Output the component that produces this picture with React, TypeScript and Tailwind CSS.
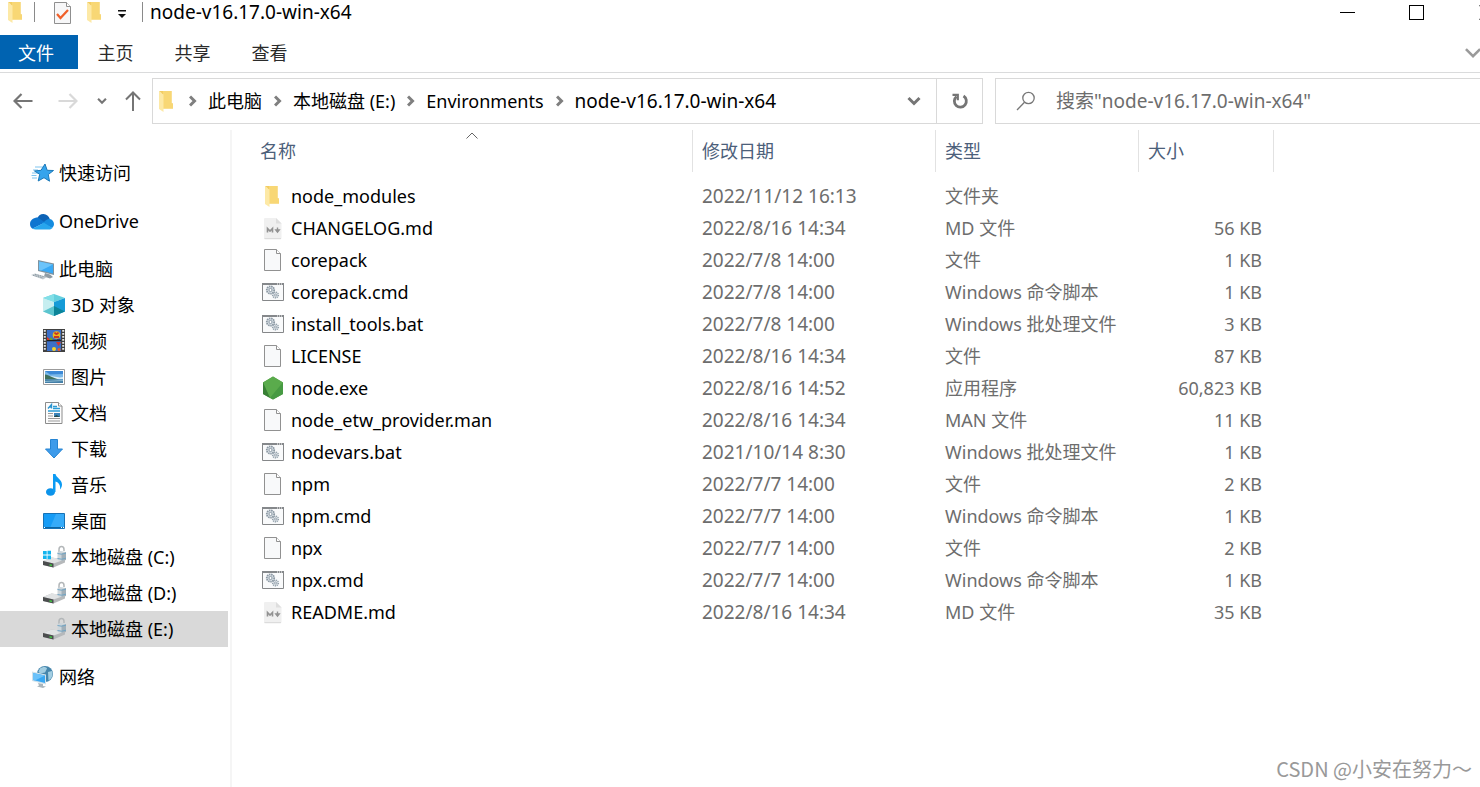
import type { ReactNode } from "react";
import clsx from "clsx";

type IconProps = { className?: string };

/* ---------- Icons ---------- */

const FolderIcon = ({ className }: IconProps) => (
    <svg className={className} width="24" height="24" viewBox="0 0 24 24" aria-hidden="true">
        <path d="M8 2h9.500v12.500h1.500v5H8z" fill="#f5cf63" />
        <path d="M9 2h8.500v12.500H19v5H9z" fill="#f8d775" />
        <path d="M5 2l4.500 3.500V23L5 20z" fill="#fde9a6" />
        <path d="M5 2h4v3.200z" fill="#f3cd62" />
    </svg>
);

const FileIcon = () => (
    <svg width="24" height="24" viewBox="0 0 24 24" aria-hidden="true">
        <path d="M4.500 1.500h12l4 4v17h-16z" fill="#f8f9fa" stroke="#919191" />
        <path d="M16.500 1.500v4h4" fill="#fff" stroke="#919191" />
    </svg>
);

const MarkdownIcon = () => (
    <svg width="24" height="24" viewBox="0 0 24 24" aria-hidden="true">
        <path d="M5 2h11l5.500 5.500V22a1.500 1.500 0 0 1-1.500 1.500H5.500A1.500 1.500 0 0 1 4 22V3a1 1 0 0 1 1-1z" fill="#f0f0f0" />
        <path d="M4.500 22.500h16.500" stroke="#dcdcdc" />
        <path d="M16 2v5.500h5.500z" fill="#dedede" />
        <path d="M7.500 16.500v-4l2.500 2.500 2.500-2.500v4" fill="none" stroke="#929292" strokeWidth="1.600" />
        <path d="M17.500 11.500v3M15.800 14h3.400l-1.700 2.200z" fill="#929292" stroke="#929292" strokeWidth="1.400" />
    </svg>
);

const ScriptIcon = () => (
    <svg width="24" height="24" viewBox="0 0 24 24" aria-hidden="true">
        <path d="M2.500 3.500h21v17h-21z" fill="#f9fafb" stroke="#858789" />
        <path d="M2 4h22" stroke="#85888b" strokeWidth="2" />
        <path d="M17 4h1M19 4h1M21 4h1" stroke="#fff" />
        <circle cx="10.500" cy="10" r="3.700" fill="#dfe5ea" stroke="#8b98a3" strokeWidth="1.800" strokeDasharray="1.500 0.700" />
        <circle cx="10.500" cy="10" r="1.600" fill="#fff" stroke="#8796a3" />
        <circle cx="15.500" cy="15" r="2.800" fill="#e6eaee" stroke="#92a0ab" strokeWidth="1.600" strokeDasharray="1.200 0.700" />
        <circle cx="15.500" cy="15" r="1" fill="#fff" stroke="#93a1ac" />
    </svg>
);

const NodeIcon = () => (
    <svg width="24" height="24" viewBox="0 0 24 24" aria-hidden="true">
        <path d="M13 .500L23 6.500v11.500L13 23.500 3 18V6.500z" fill="#4f9f45" />
        <path d="M13 .500L23 6.500 10 22 3 6.500z" fill="#5aab4c" />
        <path d="M3 6.500L10 22 3 18z" fill="#387f35" />
        <path d="M23 6.500V18l-10 5.500L10 22z" fill="#479a43" />
    </svg>
);

const QuickAccessIcon = () => (
    <svg width="24" height="24" viewBox="0 0 24 24" aria-hidden="true">
        <path d="M5 6h8M3 9h5M2 12h6M2 17h5M1.500 14.500h5" stroke="#7fc4ee" strokeWidth="1" />
        <path d="M15 3l2.200 6.300 6.300.2-5.200 4 1.200 6.700-5.500-3.500L8.200 20l1.500-6.700L4.500 10l6.500-.700z" fill="#35a4ed" stroke="#1c79b9" />
    </svg>
);

const OneDriveIcon = () => (
    <svg width="24" height="24" viewBox="0 0 24 24" aria-hidden="true">
        <path d="M7 10c1-3 3.500-5 6.500-4.900 3 .1 5.400 2 6.300 4.900L14 15z" fill="#0d63b6" />
        <path d="M8 8.500c-4.500 0-8 2.500-8 6.500 0 2 .9 3.800 2.400 4.700L15 13.500z" fill="#0e75d0" />
        <path d="M14.500 12.500c1.500-2 3.500-2.800 5.300-2.500 2.400.3 4.200 2.400 4.200 5 0 1.800-.8 3.200-2 4L12 14z" fill="#158bdf" />
        <path d="M2.400 19.700L14 13.800l8.500 5.200c-.7.900-2 1.500-3.500 1.500H6c-1.500 0-2.700-.2-3.600-.8z" fill="#27a6ee" />
    </svg>
);

const ComputerIcon = () => (
    <svg width="24" height="24" viewBox="0 0 24 24" aria-hidden="true">
        <path d="M8 3l16 3.500v11.500L8 14z" fill="#7f929e" />
        <path d="M9 4.500l14 3v9L9 13z" fill="#39a9f5" />
        <path d="M9 4.500l14 3L11 13.500 9 13z" fill="#6cc4fa" />
        <path d="M15 16l5 1.500 3 2.500-3 1.500-6-2z" fill="#8f9ba3" />
        <path d="M1 18l4-1.500L17 20l-4 2.500z" fill="#c3cbd0" />
        <path d="M3 18.300l10 2.700M5 17.300l10 2.700" stroke="#8d9ba4" strokeDasharray="1.500 1" />
    </svg>
);

const CubeIcon = () => (
    <svg width="24" height="24" viewBox="0 0 24 24" aria-hidden="true">
        <path d="M1 5l11-4 11 4-11 4z" fill="#65d0dd" />
        <path d="M1 5l11 4v14L1 18.500z" fill="#c6eef0" />
        <path d="M23 5l-11 4v14l11-4.500z" fill="#159bd7" />
        <path d="M12 13l-11 5.500L12 23z" fill="#5cc5cf" />
        <path d="M12 13l11 5.500L12 23z" fill="#0b8498" />
        <path d="M1 5l11-4v8z" fill="#82dfe7" />
    </svg>
);

const VideoIcon = () => (
    <svg width="24" height="24" viewBox="0 0 24 24" aria-hidden="true">
        <path d="M1 0h22v23H1z" fill="#414141" />
        <path d="M5 1h14v21H5z" fill="#3c70c8" />
        <path d="M2.800 1v21M21.200 1v21" stroke="#e6e6e6" strokeWidth="2" strokeDasharray="1.800 1.200" />
        <path d="M5 11.500h14" stroke="#222" strokeWidth="1.500" />
        <circle cx="14.500" cy="6" r="3.800" fill="#e9b91d" />
        <path d="M12.500 3.500c1.500 2 2.500 2 4 0M12 8h5" stroke="#c73524" strokeWidth="1.800" fill="none" />
        <path d="M5 8l4 3H5zM14 13h5l-2.500 4z" fill="#d5362b" />
        <path d="M7 11l2-3 2 3z" fill="#61a52d" />
        <circle cx="12" cy="20" r="2" fill="#f4d22a" />
        <circle cx="17" cy="20.500" r="1.500" fill="#ec5b25" />
        <path d="M15 10.500h3v1.500h-3z" fill="#371f1b" />
    </svg>
);

const PictureIcon = () => (
    <svg width="24" height="24" viewBox="0 0 24 24" aria-hidden="true">
        <path d="M1.500 4.500h21v15h-21z" fill="#fff" stroke="#9b9b9b" />
        <path d="M3 6h18v12H3z" fill="#7bb9e9" />
        <path d="M3 6h18v3L8 9.500z" fill="#3c89d6" />
        <path d="M8 11l10 1.500 3-.5v2H9z" fill="#d9edf7" />
        <path d="M3 9.500c4 .5 7 3 14 5H3z" fill="#3f705c" />
        <path d="M3 14.500h18V18H3z" fill="#447fa8" />
        <path d="M3 16.500l18-1" stroke="#88b8cf" />
    </svg>
);

const DocumentIcon = () => (
    <svg width="24" height="24" viewBox="0 0 24 24" aria-hidden="true">
        <path d="M3.500 1.500h13l3.500 3.500v17.500H3.500z" fill="#fcfcfc" stroke="#8c8c8c" />
        <path d="M16.500 1.500V5H20" fill="#fff" stroke="#8c8c8c" />
        <path d="M6 7.500L9.500 3.500v4M7 6h3" stroke="#2b94cf" strokeWidth="1.400" fill="none" />
        <path d="M11 5.500h4M11 7.500h7M6 10h12" stroke="#2a9bd5" strokeWidth="1.300" />
        <path d="M6 12.500h5M6 15h5M6 17.500h12M6 20h12" stroke="#999" />
        <path d="M12 12h6v4h-6z" fill="#3b84bb" />
        <path d="M12 15.500l2.500-1.500 3.500 2h-6z" fill="#244d50" />
    </svg>
);

const DownloadIcon = () => (
    <svg width="24" height="24" viewBox="0 0 24 24" aria-hidden="true">
        <path d="M8.500 2.500h7v9.500h5L12 21 3.500 12h5z" fill="#3e9bea" stroke="#2584d3" />
    </svg>
);

const MusicIcon = () => (
    <svg width="24" height="24" viewBox="0 0 24 24" aria-hidden="true">
        <ellipse cx="8.500" cy="19" rx="4.500" ry="3.800" fill="#0c93ea" />
        <path d="M11 1h2.500c.5 3.500 6.500 5.500 6.500 10.500 0 2-.8 3.700-2 5 .7-4-1-7-4.500-8V19H11z" fill="#0c9bf3" />
    </svg>
);

const DesktopIcon = () => (
    <svg width="24" height="24" viewBox="0 0 24 24" aria-hidden="true">
        <path d="M1.500 4.500h21v15h-21z" fill="#169cf6" stroke="#1672b6" />
        <path d="M14 5h8v14H8z" fill="#36abf9" />
        <path d="M2 18.500h20" stroke="#0c65a3" />
        <path d="M2 18.500h1M19 18.500h1M21 18.500h1" stroke="#fff" />
    </svg>
);

const DriveIcon = ({ system }: { system?: boolean }) => (
    <svg width="24" height="24" viewBox="0 0 24 24" aria-hidden="true">
        <path d="M1 16L9.500 12.500 23 14.500v3L11.500 22.500 1 20z" fill="#b6b9bb" />
        <path d="M1 16l8.500-3.500L23 14.500l-11.500 4z" fill="#e1e3e4" />
        <path d="M1 16l10.500 2.500v4L1 20z" fill="#4b4d4e" />
        <path d="M7.500 19.800l2.500.6" stroke="#42c443" strokeWidth="1.500" />
        <path d="M17 7V4.500c0-2 1-3 2.500-3S22 2.500 22 4.500V6" fill="none" stroke="#b3b7b9" strokeWidth="1.500" />
        <path d="M15.500 7l3-1 5.500 1v8l-5 1-3.500-1z" fill="#cdd5da" />
        <path d="M19.500 8.500L24 7v8l-4.500 1z" fill="#a1afb8" />
        <path d="M15.500 8.500l4 .7 4.500-1M15.500 13.500l4 .7 4.500-1" fill="none" stroke="#72a5c5" />
        {system && <path d="M1 6h3.700v3.500H1zM5.500 5.700H9v3.800H5.500zM1 10.500h3.700V14H1zM5.500 10.500H9v3.800H5.500z" fill="#14b4ee" />}
    </svg>
);

const NetworkIcon = () => (
    <svg width="24" height="24" viewBox="0 0 24 24" aria-hidden="true">
        <circle cx="15" cy="9" r="8" fill="#4686ac" />
        <path d="M10 3.500c3-2 6-2 7 0l-2 4-5 1-1.500-2zM18 7l4-1c1.500 4-.5 8-3.500 9.500z" fill="#a3cee2" />
        <path d="M2 6.500l14 3v10l-14-3.500z" fill="#d0e1ea" />
        <path d="M3 8l12 2.500v7.500L3 15z" fill="#38a7f3" />
        <path d="M3 8l12 2.500L5 15.500 3 15z" fill="#6bc2fa" />
        <path d="M8 18l5 1v2l3 .5-3 1.500-6-1.500 2-1z" fill="#aab6bd" />
    </svg>
);

const PropertiesIcon = () => (
    <svg width="24" height="24" viewBox="0 0 24 24" aria-hidden="true">
        <path d="M4.500 2.500h12l4 4v17h-16z" fill="#f7f7f8" stroke="#8f8f8f" />
        <path d="M16.500 2.500v4h4" fill="#fff" stroke="#8f8f8f" />
        <path d="M7 14l3.500 4 7.500-8" fill="none" stroke="#f0602a" strokeWidth="2.200" />
    </svg>
);

const BackArrow = () => (
    <svg width="20" height="16" viewBox="0 0 20 16" fill="none" stroke="currentColor" strokeWidth="2.200" aria-hidden="true">
        <path d="M19.500 8H2M8.500 1L1.500 8l7 7" />
    </svg>
);

const ForwardArrow = () => (
    <svg width="20" height="16" viewBox="0 0 20 16" fill="none" stroke="currentColor" strokeWidth="2.200" aria-hidden="true">
        <path d="M.500 8H18M11.500 1l7 7-7 7" />
    </svg>
);

const UpArrow = () => (
    <svg width="16" height="20" viewBox="0 0 16 20" fill="none" stroke="currentColor" strokeWidth="2" aria-hidden="true">
        <path d="M8 20V2M1 8.500L8 1.500l7 7" />
    </svg>
);

const ChevronDown = ({ size = 14, stroke = 3 }: { size?: number; stroke?: number }) => (
    <svg width={size} height={size} viewBox="0 0 14 14" fill="none" stroke="currentColor" strokeWidth={stroke} aria-hidden="true">
        <path d="M1.500 4L7 9.500 12.500 4" />
    </svg>
);

const ChevronRight = () => (
    <svg width="8" height="12" viewBox="0 0 8 12" fill="none" stroke="#7f7f7f" strokeWidth="3" aria-hidden="true">
        <path d="M1 1.500L5.500 6 1 10.500" />
    </svg>
);

const RefreshIcon = () => (
    <svg width="18" height="18" viewBox="0 0 18 18" fill="none" stroke="#757575" strokeWidth="2.800" aria-hidden="true">
        <path d="M12.500 4A6 6 0 1 1 5.500 4.500" />
        <path d="M1.500 2.800h5.300v5.500" strokeWidth="2.200" />
    </svg>
);

const SearchIcon = () => (
    <svg width="20" height="20" viewBox="0 0 20 20" fill="none" stroke="#777" strokeWidth="1.300" aria-hidden="true">
        <circle cx="12.500" cy="7" r="5.700" />
        <path d="M8.500 11.200L1 19" />
    </svg>
);

/* ---------- Data ---------- */

type NavItem = { label: string; icon: ReactNode; selected?: boolean };

const navGroups: { root: NavItem; children?: NavItem[] }[] = [
    { root: { label: "快速访问", icon: <QuickAccessIcon /> } },
    { root: { label: "OneDrive", icon: <OneDriveIcon /> } },
    {
        root: { label: "此电脑", icon: <ComputerIcon /> },
        children: [
            { label: "3D 对象", icon: <CubeIcon /> },
            { label: "视频", icon: <VideoIcon /> },
            { label: "图片", icon: <PictureIcon /> },
            { label: "文档", icon: <DocumentIcon /> },
            { label: "下载", icon: <DownloadIcon /> },
            { label: "音乐", icon: <MusicIcon /> },
            { label: "桌面", icon: <DesktopIcon /> },
            { label: "本地磁盘 (C:)", icon: <DriveIcon system /> },
            { label: "本地磁盘 (D:)", icon: <DriveIcon /> },
            { label: "本地磁盘 (E:)", icon: <DriveIcon />, selected: true },
        ],
    },
    { root: { label: "网络", icon: <NetworkIcon /> } },
];

const fileIcons = {
    folder: <FolderIcon />,
    md: <MarkdownIcon />,
    file: <FileIcon />,
    script: <ScriptIcon />,
    node: <NodeIcon />,
};

const files: { name: string; date: string; type: string; size: string; icon: keyof typeof fileIcons }[] = [
    { name: "node_modules", date: "2022/11/12 16:13", type: "文件夹", size: "", icon: "folder" },
    { name: "CHANGELOG.md", date: "2022/8/16 14:34", type: "MD 文件", size: "56 KB", icon: "md" },
    { name: "corepack", date: "2022/7/8 14:00", type: "文件", size: "1 KB", icon: "file" },
    { name: "corepack.cmd", date: "2022/7/8 14:00", type: "Windows 命令脚本", size: "1 KB", icon: "script" },
    { name: "install_tools.bat", date: "2022/7/8 14:00", type: "Windows 批处理文件", size: "3 KB", icon: "script" },
    { name: "LICENSE", date: "2022/8/16 14:34", type: "文件", size: "87 KB", icon: "file" },
    { name: "node.exe", date: "2022/8/16 14:52", type: "应用程序", size: "60,823 KB", icon: "node" },
    { name: "node_etw_provider.man", date: "2022/8/16 14:34", type: "MAN 文件", size: "11 KB", icon: "file" },
    { name: "nodevars.bat", date: "2021/10/14 8:30", type: "Windows 批处理文件", size: "1 KB", icon: "script" },
    { name: "npm", date: "2022/7/7 14:00", type: "文件", size: "2 KB", icon: "file" },
    { name: "npm.cmd", date: "2022/7/7 14:00", type: "Windows 命令脚本", size: "1 KB", icon: "script" },
    { name: "npx", date: "2022/7/7 14:00", type: "文件", size: "2 KB", icon: "file" },
    { name: "npx.cmd", date: "2022/7/7 14:00", type: "Windows 命令脚本", size: "1 KB", icon: "script" },
    { name: "README.md", date: "2022/8/16 14:34", type: "MD 文件", size: "35 KB", icon: "md" },
];

/* ---------- Parts ---------- */

function TitleBar() {
    return (
        <header className="flex h-6 items-center">
            <FolderIcon className="ml-[3px]" />
            <span className="ml-[7px] h-5 w-px bg-[#8a8a8a]" />
            <button aria-label="属性" className="ml-[15px]">
                <PropertiesIcon />
            </button>
            <button aria-label="新建文件夹" className="ml-2">
                <FolderIcon />
            </button>
            <button aria-label="自定义快速访问工具栏" className="ml-[11px]">
                <svg width="10" height="10" viewBox="0 0 10 10" className="mt-1.5" aria-hidden="true">
                    <path d="M1 0h8v1.500H1zM1 4h8L5 8z" fill="#111" />
                </svg>
            </button>
            <span className="ml-[15px] h-5 w-px bg-[#8a8a8a]" />
            <h1 className="ml-[7px] text-[19px] leading-6">node-v16.17.0-win-x64</h1>
            <div className="-mr-10 ml-auto flex">
                <button aria-label="最小化" className="flex h-6 w-[69px] items-center justify-center">
                    <span className="h-px w-[15px] bg-black" />
                </button>
                <button aria-label="最大化" className="flex h-6 w-[69px] items-center justify-center">
                    <span className="size-[15px] border border-black" />
                </button>
                <button aria-label="关闭" className="flex h-6 w-[69px] items-center justify-center">
                    <svg width="13" height="15" viewBox="0 0 13 15" stroke="#000" aria-hidden="true">
                        <path d="M.500 .500l12 14M12.500 .500l-12 14" />
                    </svg>
                </button>
            </div>
        </header>
    );
}

function Ribbon() {
    return (
        <div className="mt-[11px] flex h-[38px] items-start border-b border-[#dadbdc]">
            <button className="h-[34px] w-[78px] bg-[#0063b1] pt-0.5 pr-1.5 text-white">文件</button>
            <button className="h-[34px] w-[77px] pt-0.5 pr-0.5 text-[#2b2b2b]">主页</button>
            <button className="h-[34px] w-[77px] pt-0.5 pr-0.5 text-[#2b2b2b]">共享</button>
            <button className="h-[34px] w-[77px] pt-0.5 pr-0.5 text-[#2b2b2b]">查看</button>
            <button aria-label="展开功能区" className="-mr-0.5 ml-auto h-[34px] pt-0.5 text-[#9a9a9a]">
                <ChevronDown size={18} stroke={2} />
            </button>
        </div>
    );
}

function Crumb({ children, large }: { children: ReactNode; large?: boolean }) {
    return (
        <li className="flex items-center gap-[11px]">
            <ChevronRight />
            <a href="#" className={clsx("leading-6", large && "text-[19px]")}>
                {children}
            </a>
        </li>
    );
}

function AddressRow() {
    return (
        <div className="mt-[5px] flex h-[46px] items-center">
            <div className="flex w-[152px] shrink-0 items-center text-[#757575]">
                <button aria-label="后退" className="ml-[13px]"><BackArrow /></button>
                <button aria-label="前进" className="ml-[25px] text-[#d9d9d9]"><ForwardArrow /></button>
                <button aria-label="最近浏览的位置" className="ml-[19px]"><ChevronDown size={10} /></button>
                <button aria-label="上移" className="ml-[18px]"><UpArrow /></button>
            </div>
            <nav aria-label="地址" className="flex h-full min-w-0 flex-1 items-center border border-[#d9d9d9]">
                <FolderIcon className="ml-px shrink-0" />
                <ol className="ml-[11px] flex gap-3 whitespace-nowrap">
                    <Crumb>此电脑</Crumb>
                    <Crumb>本地磁盘 (E:)</Crumb>
                    <Crumb>Environments</Crumb>
                    <Crumb large>node-v16.17.0-win-x64</Crumb>
                </ol>
                <button aria-label="以前的位置" className="ml-auto pr-[15px] text-[#757575]">
                    <ChevronDown />
                </button>
                <button aria-label="刷新" className="flex h-full w-[46px] items-center justify-center border-l border-[#d9d9d9]">
                    <RefreshIcon />
                </button>
            </nav>
            <label className="ml-3 flex h-full w-[485px] shrink-0 items-center gap-5 border border-r-0 border-[#d9d9d9] pl-5">
                <SearchIcon />
                <input
                    type="search"
                    aria-label="搜索"
                    placeholder={'搜索"node-v16.17.0-win-x64"'}
                    className="min-w-0 flex-1 text-[19px] leading-6 outline-none placeholder:text-[#6d6d6d]"
                />
            </label>
        </div>
    );
}

function NavRow({ item, child }: { item: NavItem; child?: boolean }) {
    return (
        <a
            href="#"
            aria-current={item.selected ? "page" : undefined}
            className={clsx(
                "mr-0.5 flex h-9 items-center gap-[5px] leading-6",
                child ? "pl-[42px]" : "pl-[30px]",
                item.selected && "bg-[#d9d9d9]"
            )}
        >
            {item.icon}
            {item.label}
        </a>
    );
}

function Sidebar() {
    return (
        <aside className="w-[232px] shrink-0 border-r-2 border-[#f5f5f5] pt-[25px]">
            <ul className="flex flex-col gap-3">
                {navGroups.map(({ root, children }) => (
                    <li key={root.label}>
                        <NavRow item={root} />
                        {children && (
                            <ul>
                                {children.map((item) => (
                                    <li key={item.label}>
                                        <NavRow item={item} child />
                                    </li>
                                ))}
                            </ul>
                        )}
                    </li>
                ))}
            </ul>
        </aside>
    );
}

function FileList() {
    return (
        <table className="h-fit w-[1042px] table-fixed border-separate border-spacing-0 text-left">
            <colgroup>
                <col className="w-[461px]" />
                <col className="w-[243px]" />
                <col className="w-[203px]" />
                <col className="w-[135px]" />
            </colgroup>
            <thead className="text-[#4c607a]">
                <tr className="h-[42px]">
                    <th className="relative border-r border-[#e2e2e2] p-0 pl-7 font-normal">
                        <button>名称</button>
                        <svg width="12" height="7" viewBox="0 0 12 7" className="absolute top-0.5 left-[234px]" fill="none" stroke="#666" aria-hidden="true">
                            <path d="M.500 6.500L6 1l5.500 5.500" />
                        </svg>
                    </th>
                    <th className="border-r border-[#e2e2e2] p-0 pl-[9px] font-normal"><button>修改日期</button></th>
                    <th className="border-r border-[#e2e2e2] p-0 pl-[9px] font-normal"><button>类型</button></th>
                    <th className="border-r border-[#e2e2e2] p-0 pl-[9px] font-normal"><button>大小</button></th>
                </tr>
            </thead>
            <tbody className="text-[#6d6d6d] before:block before:h-2 before:content-['']">
                {files.map((file) => (
                    <tr key={file.name} className="h-8">
                        <td className="p-0 pl-7 text-black">
                            <span className="flex items-center gap-[7px] leading-6">
                                {fileIcons[file.icon]}
                                {file.name}
                            </span>
                        </td>
                        <td className="p-0 pl-[9px] text-[19px] leading-6">{file.date}</td>
                        <td className="p-0 pl-[9px] leading-6">{file.type}</td>
                        <td className="p-0 pr-3 text-right leading-6">{file.size}</td>
                    </tr>
                ))}
            </tbody>
        </table>
    );
}

export default function App() {
    return (
        <div className="relative flex min-h-screen flex-col overflow-hidden bg-white font-['Noto_Sans','Noto_Sans_CJK_SC',sans-serif] text-[18px] leading-6 text-black">
            <TitleBar />
            <Ribbon />
            <AddressRow />
            <div className="mt-1.5 flex flex-1">
                <Sidebar />
                <main>
                    <FileList />
                </main>
            </div>
            <p className="absolute right-2 bottom-1.5 font-['Noto_Sans_CJK_SC',sans-serif] text-[20px] leading-6 text-[#999]">CSDN @小安在努力～</p>
        </div>
    );
}
